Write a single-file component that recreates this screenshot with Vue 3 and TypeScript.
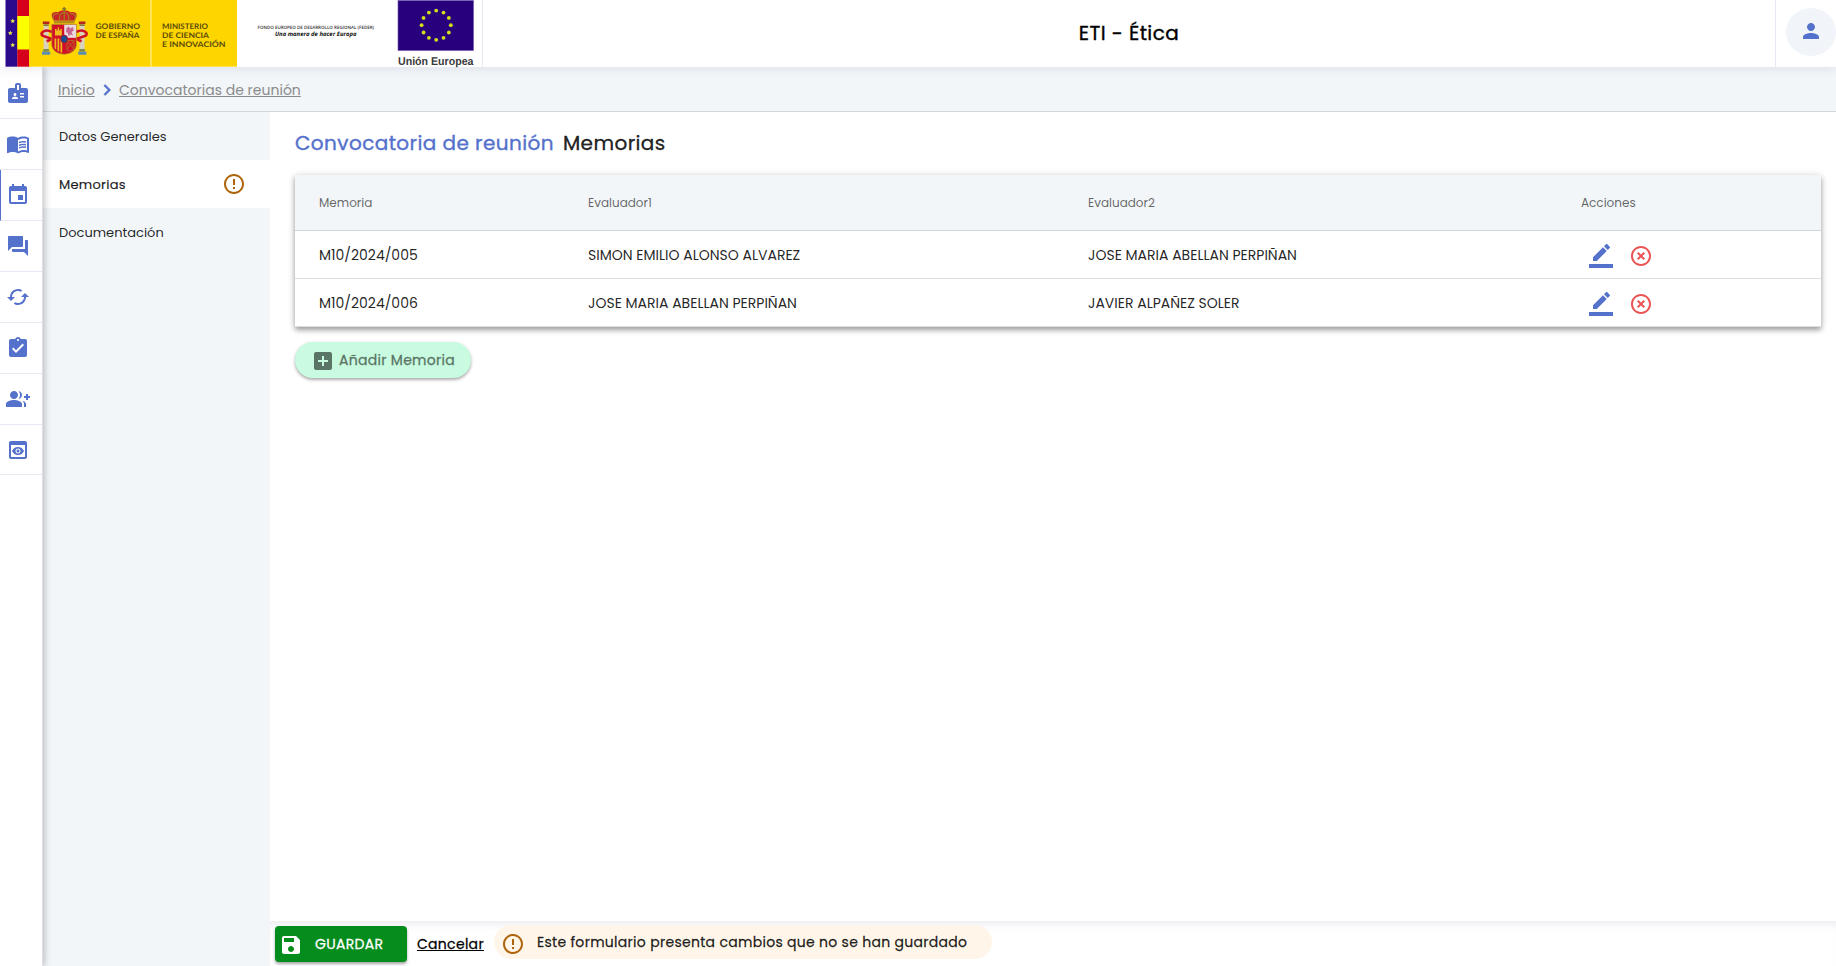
<script setup lang="ts">
interface NavItem {
  name: string
  paths: string[]
  active?: boolean
}

interface MenuItem {
  label: string
  active?: boolean
}

interface Row {
  code: string
  first: string
  second: string
}

const nav: NavItem[] = [
  {
    name: 'badge',
    paths: [
      'M20 7h-5V4c0-1.1-.9-2-2-2h-2c-1.1 0-2 .9-2 2v3H4c-1.1 0-2 .9-2 2v11c0 1.1.9 2 2 2h16c1.1 0 2-.9 2-2V9c0-1.1-.9-2-2-2zM9 12c.83 0 1.5.67 1.5 1.5S9.83 15 9 15s-1.5-.67-1.5-1.5S8.17 12 9 12zm3 6H6v-.75c0-1 2-1.5 3-1.5s3 .5 3 1.5V18zm1-9h-2V4h2v5zm5 7.5h-4V15h4v1.5zm0-3h-4V12h4v1.5z',
    ],
  },
  {
    name: 'book',
    paths: [
      'M21 5c-1.11-.35-2.33-.5-3.5-.5-1.95 0-4.05.4-5.5 1.5-1.45-1.1-3.55-1.5-5.5-1.5S2.45 4.9 1 6v14.65c0 .25.25.5.5.5.1 0 .15-.05.25-.05C3.1 20.45 5.05 20 6.5 20c1.95 0 4.05.4 5.5 1.5 1.35-.85 3.8-1.5 5.5-1.5 1.65 0 3.35.3 4.75 1.05.1.05.15.05.25.05.25 0 .5-.25.5-.5V6c-.6-.45-1.25-.75-2-1zm0 13.5c-1.1-.35-2.3-.5-3.5-.5-1.7 0-4.15.65-5.5 1.5V8c1.35-.85 3.8-1.5 5.5-1.5 1.2 0 2.4.15 3.5.5v11.5z',
      'M17.5 10.5c.88 0 1.73.09 2.5.26V9.24c-.79-.15-1.64-.24-2.5-.24-1.7 0-3.24.29-4.5.83v1.66c1.13-.64 2.7-.99 4.5-.99zM13 12.49v1.66c1.13-.64 2.7-.99 4.5-.99.88 0 1.73.09 2.5.26V11.9c-.79-.15-1.64-.24-2.5-.24-1.7 0-3.24.3-4.5.83zm4.5 1.84c-1.7 0-3.24.29-4.5.83v1.66c1.13-.64 2.7-.99 4.5-.99.88 0 1.73.09 2.5.26v-1.52c-.79-.16-1.64-.24-2.5-.24z',
    ],
  },
  {
    name: 'event',
    active: true,
    paths: [
      'M17 12h-5v5h5v-5zM16 1v2H8V1H6v2H5c-1.11 0-1.99.9-1.99 2L3 19c0 1.1.89 2 2 2h14c1.1 0 2-.9 2-2V5c0-1.1-.9-2-2-2h-1V1h-2zm3 18H5V8h14v11z',
    ],
  },
  {
    name: 'forum',
    paths: [
      'M21 6h-2v9H6v2c0 .55.45 1 1 1h11l4 4V7c0-.55-.45-1-1-1zm-4 6V3c0-.55-.45-1-1-1H3c-.55 0-1 .45-1 1v14l4-4h10c.55 0 1-.45 1-1z',
    ],
  },
  {
    name: 'cached',
    paths: [
      'M19 8l-4 4h3c0 3.31-2.69 6-6 6-1.01 0-1.97-.25-2.8-.7l-1.46 1.46C8.97 19.54 10.43 20 12 20c4.42 0 8-3.58 8-8h3l-4-4zM6 12c0-3.31 2.69-6 6-6 1.01 0 1.97.25 2.8.7l1.46-1.46C15.03 4.46 13.57 4 12 4c-4.42 0-8 3.58-8 8H1l4 4 4-4H6z',
    ],
  },
  {
    name: 'assignment',
    paths: [
      'M19 3h-4.18C14.4 1.84 13.3 1 12 1c-1.3 0-2.4.84-2.82 2H5c-1.1 0-2 .9-2 2v14c0 1.1.9 2 2 2h14c1.1 0 2-.9 2-2V5c0-1.1-.9-2-2-2zm-7 0c.55 0 1 .45 1 1s-.45 1-1 1-1-.45-1-1 .45-1 1-1zm-2 14l-4-4 1.41-1.41L10 14.17l6.59-6.59L18 9l-8 8z',
    ],
  },
  {
    name: 'group',
    paths: [
      'M22 9V7h-2v2h-2v2h2v2h2v-2h2V9h-2z',
      'M8 12c2.21 0 4-1.79 4-4s-1.79-4-4-4-4 1.79-4 4 1.79 4 4 4zm0 1c-2.67 0-8 1.34-8 4v3h16v-3c0-2.66-5.33-4-8-4z',
      'M12.51 4.05C13.43 5.11 14 6.49 14 8s-.57 2.89-1.49 3.95C14.47 11.7 16 10.04 16 8s-1.53-3.7-3.49-3.95zM16.53 13.83C17.42 14.66 18 15.7 18 17v3h2v-3c0-1.45-1.59-2.51-3.47-3.17z',
    ],
  },
  {
    name: 'preview',
    paths: [
      'M19 3H5c-1.11 0-2 .9-2 2v14c0 1.1.89 2 2 2h14c1.11 0 2-.9 2-2V5c0-1.1-.9-2-2-2zm0 16H5V7h14v12zm-5.5-6c0 .83-.67 1.5-1.5 1.5s-1.5-.67-1.5-1.5.67-1.5 1.5-1.5 1.5.67 1.5 1.5zM12 9c-2.73 0-5.06 1.66-6 4 .94 2.34 3.27 4 6 4s5.06-1.66 6-4c-.94-2.34-3.27-4-6-4zm0 6.5c-1.38 0-2.5-1.12-2.5-2.5s1.12-2.5 2.5-2.5 2.5 1.12 2.5 2.5-1.12 2.5-2.5 2.5z',
    ],
  },
]

const menu: MenuItem[] = [
  { label: 'Datos Generales' },
  { label: 'Memorias', active: true },
  { label: 'Documentación' },
]

const rows: Row[] = [
  { code: 'M10/2024/005', first: 'SIMON EMILIO ALONSO ALVAREZ', second: 'JOSE MARIA ABELLAN PERPIÑAN' },
  { code: 'M10/2024/006', first: 'JOSE MARIA ABELLAN PERPIÑAN', second: 'JAVIER ALPAÑEZ SOLER' },
]

const warning =
  'M11 15h2v2h-2zm0-8h2v6h-2zm.99-5C6.47 2 2 6.48 2 12s4.47 10 9.99 10C17.52 22 22 17.52 22 12S17.52 2 11.99 2zM12 20c-4.42 0-8-3.58-8-8s3.58-8 8-8 8 3.58 8 8-3.58 8-8 8z'

const euStars = Array.from({ length: 12 }, (_, i) => {
  const a = (i * Math.PI) / 6
  return { x: 436.2 + 14.6 * Math.sin(a), y: 25.2 - 14.6 * Math.cos(a) }
})
</script>

<template>
  <div class="app">
    <header class="top">
      <div class="logos">
        <svg class="logo-art" width="482" height="68" viewBox="0 0 482 68">
          <rect x="5.5" y="0" width="12" height="66.7" fill="#2b0a8c" />
          <rect x="17.3" y="0" width="12" height="66.7" fill="#d6001c" />
          <rect x="17.3" y="16" width="12" height="33.5" fill="#fbff00" />
          <g fill="#e9ee4a">
            <path d="M12.7 18.6l.7 1.6 1.7.1-1.3 1.1.4 1.7-1.5-.9-1.5.9.4-1.7-1.3-1.1 1.7-.1z" />
            <path d="M10.3 30.6l.7 1.6 1.7.1-1.3 1.1.4 1.7-1.5-.9-1.5.9.4-1.7-1.3-1.1 1.7-.1z" />
            <path d="M12.7 42.6l.7 1.6 1.7.1-1.3 1.1.4 1.7-1.5-.9-1.5.9.4-1.7-1.3-1.1 1.7-.1z" />
          </g>
          <rect x="29" y="0" width="208" height="66.7" fill="#ffd500" />
          <rect x="150.2" y="0" width="1.5" height="66.7" fill="#ffe873" />

          <!-- coat of arms -->
          <g>
            <rect x="43.6" y="24" width="5" height="27" fill="#d9d3bd" />
            <rect x="79.6" y="24" width="5" height="27" fill="#d9d3bd" />
            <path d="M42.8 21.5h6.6v2.6h-6.6zM78.8 21.5h6.6v2.6h-6.6z" fill="#b5261e" />
            <path d="M43.5 24.2h5.2v1.8h-5.2zM79.5 24.2h5.2v1.8h-5.2z" fill="#8c7a2c" />
            <path d="M42 51.5h8.2v3.3H42zM78.2 51.5h8.2v3.3h-8.2z" fill="#5d8fb3" />
            <path d="M43.3 49h5.6v2.6h-5.6zM79.3 49h5.6v2.6h-5.6z" fill="#7d8a4a" />
            <path d="M52 32c-4-2-8-1.8-10.2.8-1 1.8.4 3.2 3 3.7l5.4 1.8c1.2 1-1.2 2-3.6 3" fill="none" stroke="#cf1126" stroke-width="2.6" />
            <path d="M76.2 32c4-2 8-1.8 10.2.8 1 1.8-.4 3.2-3 3.7L78 38.3c-1.2 1 1.2 2 3.6 3" fill="none" stroke="#cf1126" stroke-width="2.6" />
            <path d="M51.8 24.5h24.6v19.5c0 5.5-4 9.5-12.3 10.3-8.3-.8-12.3-4.8-12.3-10.3z" fill="#d01129" stroke="#a98a23" stroke-width=".6" />
            <path d="M64.2 24.8h11.9v13H64.2z" fill="#eadbe0" />
            <path d="M66.5 28l2.5-1.5 1 2 3-1.5.8 3.5-2.3 1.5 1.5 3.5-2.5-1-2 1.8-.6-3.3-1.9-1z" fill="#c7678f" />
            <path d="M55 29h1.5v1.5h1.2v-3h1.4v3h1.2V29h1.5v6.5H55z" fill="#f0bb1c" />
            <path d="M54.5 38.5h1.7V50l-1.7-2zM57.5 38.5h1.7v13.2l-1.7-.9zM60.5 38.5h1.7v14.3l-1.7-.5z" fill="#f0bb1c" />
            <path d="M67 40.5h7v8.5l-3.5 2.6-3.5-1.6zM67 40.5l7 8.5M74 40.5l-7 8.5" fill="none" stroke="#b06a22" stroke-width=".9" />
            <ellipse cx="64.2" cy="39" rx="3.4" ry="3.9" fill="#1b4a93" stroke="#a01a2b" stroke-width=".9" />
            <path d="M53.5 23.5h21.4l-.8-3H54.3z" fill="#b58b1c" />
            <path d="M54 20.5c-4.8-6-1.4-9.7 4.2-8.2 2.6-2.8 9.4-2.8 12 0 5.6-1.5 9 2.2 4.2 8.2z" fill="#c9242a" />
            <path d="M54.5 20.8c-3.6-5.4-.4-7.6 4-7.1M74 20.8c3.6-5.4.4-7.6-4-7.1M60 20.5c-1.5-4 0-7 4.2-8.5 4.2 1.5 5.7 4.5 4.2 8.5M64.2 12v8.5" fill="none" stroke="#a87b1b" stroke-width="1.3" />
            <path d="M63.5 7h1.4v1.3h1.3v1.2h-1.3v2.3h-1.4V9.5h-1.3V8.3h1.3z" fill="#7c6f2a" />
          </g>

          <g class="gov-text">
            <text x="95.5" y="29.4" textLength="44.5" lengthAdjust="spacingAndGlyphs">GOBIERNO</text>
            <text x="95.5" y="38.4" textLength="44" lengthAdjust="spacingAndGlyphs">DE ESPAÑA</text>
            <text x="162" y="29.4" textLength="46" lengthAdjust="spacingAndGlyphs">MINISTERIO</text>
            <text x="162" y="38.4" textLength="47" lengthAdjust="spacingAndGlyphs">DE CIENCIA</text>
            <text x="162" y="47.4" textLength="63.5" lengthAdjust="spacingAndGlyphs">E INNOVACIÓN</text>
          </g>
          <text class="fund" x="257.5" y="28.9" textLength="116.5" lengthAdjust="spacingAndGlyphs">FONDO EUROPEO DE DESARROLLO REGIONAL (FEDER)</text>
          <text class="motto" x="275" y="36.4" textLength="81.5" lengthAdjust="spacingAndGlyphs">Una manera de hacer Europa</text>

          <rect x="398" y="0.5" width="75.5" height="50" fill="#28007d" stroke="#6f55a8" stroke-width=".6" />
          <circle v-for="(s, i) in euStars" :key="i" :cx="s.x" :cy="s.y" r="1.9" fill="#d5e01b" />
          <text class="union" x="398" y="64.8" textLength="75.5" lengthAdjust="spacingAndGlyphs">Unión Europea</text>
        </svg>
      </div>
      <h1 class="app-title strong">ETI - Ética</h1>
      <div class="user">
        <div class="avatar">
          <svg class="icon" viewBox="0 0 24 24">
            <path d="M12 12c2.21 0 4-1.79 4-4s-1.79-4-4-4-4 1.79-4 4 1.79 4 4 4zm0 2c-2.67 0-8 1.34-8 4v2h16v-2c0-2.66-5.33-4-8-4z" />
          </svg>
        </div>
      </div>
    </header>

    <div class="body">
      <nav class="rail">
        <a v-for="item in nav" :key="item.name" class="rail-item" :class="{ active: item.active }">
          <svg class="icon" viewBox="0 0 24 24">
            <path v-for="(p, i) in item.paths" :key="i" :d="p" />
          </svg>
        </a>
      </nav>

      <div class="page">
        <div class="crumbs">
          <a class="crumb home">Inicio</a>
          <svg class="icon chevron" viewBox="0 0 24 24"><path d="M10 6L8.59 7.41 13.17 12l-4.58 4.59L10 18l6-6z" /></svg>
          <a class="crumb">Convocatorias de reunión</a>
        </div>

        <div class="columns">
          <aside class="menu">
            <a v-for="m in menu" :key="m.label" class="menu-item" :class="{ active: m.active, strong: m.active }">
              <span>{{ m.label }}</span>
              <svg v-if="m.active" class="icon warn" viewBox="0 0 24 24"><path :d="warning" /></svg>
            </a>
          </aside>

          <section class="content">
            <main class="main">
              <h2 class="title strong"><span class="title-main">Convocatoria de reunión</span><span>Memorias</span></h2>

              <div class="table">
                <div class="tr head">
                  <span>Memoria</span>
                  <span>Evaluador1</span>
                  <span>Evaluador2</span>
                  <span>Acciones</span>
                </div>
                <div v-for="r in rows" :key="r.code" class="tr">
                  <span>{{ r.code }}</span>
                  <span>{{ r.first }}</span>
                  <span>{{ r.second }}</span>
                  <span class="actions">
                    <svg class="icon" viewBox="0 0 24 24">
                      <path d="M17.75 7L14 3.25l-10 10V17h3.75l10-10zm2.96-2.96c.39-.39.39-1.02 0-1.41L18.37.29c-.39-.39-1.02-.39-1.41 0L15 2.25 18.75 6l1.96-1.96zM0 20h24v4H0z" />
                    </svg>
                    <svg class="icon remove" viewBox="0 0 24 24">
                      <path d="M14.59 8L12 10.59 9.41 8 8 9.41 10.59 12 8 14.59 9.41 16 12 13.41 14.59 16 16 14.59 13.41 12 16 9.41 14.59 8zM12 2C6.47 2 2 6.47 2 12s4.47 10 10 10 10-4.47 10-10S17.53 2 12 2zm0 18c-4.41 0-8-3.59-8-8s3.59-8 8-8 8 3.59 8 8-3.59 8-8 8z" />
                    </svg>
                  </span>
                </div>
              </div>

              <button class="add strong">
                <svg class="icon" viewBox="0 0 24 24">
                  <path d="M19 3H5c-1.11 0-2 .9-2 2v14c0 1.1.89 2 2 2h14c1.1 0 2-.9 2-2V5c0-1.1-.9-2-2-2zm-2 10h-4v4h-2v-4H7v-2h4V7h2v4h4v2z" />
                </svg>
                <span>Añadir Memoria</span>
              </button>
            </main>

            <footer class="footer">
              <button class="save strong">
                <svg class="icon" viewBox="0 0 24 24">
                  <path d="M17 3H5c-1.11 0-2 .9-2 2v14c0 1.1.89 2 2 2h14c1.1 0 2-.9 2-2V7l-4-4zm-5 16c-1.66 0-3-1.34-3-3s1.34-3 3-3 3 1.34 3 3-1.34 3-3 3zm3-10H5V5h10v4z" />
                </svg>
                <span>GUARDAR</span>
              </button>
              <a class="cancel strong">Cancelar</a>
              <div class="notice strong">
                <svg class="icon warn" viewBox="0 0 24 24"><path :d="warning" /></svg>
                <span>Este formulario presenta cambios que no se han guardado</span>
              </div>
            </footer>
          </section>
        </div>
      </div>
    </div>
  </div>
</template>

<style>
body {
  margin: 0;
  overflow: hidden;
}
</style>

<style scoped>
* {
  box-sizing: border-box;
}
.app {
  height: 966px;
  display: flex;
  flex-direction: column;
  background: #fff;
  color: rgba(0, 0, 0, 0.87);
  font-family: Poppins, Inter, 'Open Sans', sans-serif;
  font-size: 14px;
}
.icon {
  width: 24px;
  height: 24px;
  flex: none;
  fill: #5471cb;
  display: block;
}
.icon.warn {
  fill: #ae650b;
}
button {
  border: 0;
  margin: 0;
  font-family: inherit;
}
/* weight between regular and medium */
.strong {
  font-weight: 400;
  letter-spacing: 0.021em;
  -webkit-text-stroke: 0.018em currentColor;
}

.top {
  height: 67px;
  flex: none;
  display: flex;
  background: #fff;
  box-shadow: 0 2px 11px rgba(60, 60, 110, 0.1);
  position: relative;
  z-index: 3;
}
.logos {
  width: 483px;
  border-right: 1px solid #e7e8f2;
}
.logo-art {
  display: block;
  text-rendering: geometricPrecision;
}
.gov-text {
  font: 700 7.7px Lato, sans-serif;
  fill: #594b08;
}
.fund {
  font: 600 4.6px 'Open Sans', sans-serif;
  fill: #333;
}
.motto {
  font: italic 700 6px 'Open Sans', sans-serif;
  fill: #111;
}
.union {
  font: 700 11.3px 'Liberation Sans', sans-serif;
  fill: #3a3a3a;
}
.app-title {
  flex: 1;
  margin: 0;
  text-align: center;
  font-size: 20px;
  line-height: 66px;
  color: #000;
}
.user {
  width: 61px;
  border-left: 1px solid #e7e8f2;
  padding: 8px 0 0 10px;
}
.avatar {
  width: 50px;
  height: 48px;
  border-radius: 50%;
  background: #f1f5f9;
  display: flex;
  align-items: center;
  justify-content: center;
  padding-bottom: 2px;
}

.body {
  flex: 1;
  display: flex;
  min-height: 0;
}
.rail {
  width: 43px;
  flex: none;
  background: #fff;
  border-right: 1px solid #dde0e6;
  box-shadow: 1px 0 7px rgba(0, 0, 0, 0.28);
  position: relative;
  z-index: 2;
}
.rail-item {
  display: flex;
  align-items: center;
  height: 51px;
  padding-left: 6px;
  border-bottom: 1px solid #e7e8f2;
}
.rail-item:first-child {
  height: 52px;
}
.rail-item:last-child {
  height: 50px;
}
.rail-item.active {
  padding-left: 5px;
  border-left: 1px solid #5471cb;
}

.page {
  flex: 1;
  display: flex;
  flex-direction: column;
  min-width: 0;
}
.crumbs {
  height: 45px;
  flex: none;
  display: flex;
  align-items: center;
  padding: 2px 0 0 15px;
  background: #f2f6f9;
  border-bottom: 1px solid #d0d7dc;
}
.crumb {
  line-height: 20px;
  color: #8b8b8b;
  text-decoration: underline;
}
.crumb.home {
  width: 37px;
}
.chevron {
  width: 22px;
  height: 22px;
  margin: 0 1px;
  stroke: #5471cb;
  stroke-width: 0.6;
}

.columns {
  flex: 1;
  display: flex;
  min-height: 0;
}
.menu {
  width: 227px;
  flex: none;
  background: #f2f6f9;
}
.menu-item {
  height: 48px;
  display: flex;
  align-items: center;
  justify-content: space-between;
  padding: 0 24px 0 16px;
  font-size: 13px;
  color: rgba(0, 0, 0, 0.87);
}
.menu-item span {
  padding-top: 1px;
}
.menu-item.active {
  background: #fff;
}

.content {
  flex: 1;
  display: flex;
  flex-direction: column;
  min-width: 0;
}
.main {
  flex: 1;
  padding: 16px 15px 0 25px;
}
.title {
  margin: 0 0 17px;
  display: flex;
  gap: 9px;
  font-size: 20px;
  line-height: 30px;
}
.title-main {
  color: #5471cb;
}
.table {
  box-shadow: 0 3px 5px rgba(0, 0, 0, 0.32), 0 1px 8px rgba(0, 0, 0, 0.14);
  background: #fff;
}
.tr {
  display: grid;
  grid-template-columns: 269px 500px 493px 1fr;
  align-items: center;
  height: 48px;
  padding: 1px 0 0 24px;
  border-bottom: 1px solid #dcdfe1;
}
.tr.head {
  height: 56px;
  padding-top: 0;
  background: #f2f6f9;
  border-bottom-color: #d0d7dc;
  font-size: 12px;
  color: rgba(0, 0, 0, 0.6);
}
.actions {
  display: flex;
  gap: 16px;
  padding: 1px 0 0 8px;
}
.remove {
  fill: #ea5455;
}
.add {
  width: 176px;
  height: 36px;
  margin-top: 15px;
  padding: 0 0 0 16px;
  display: flex;
  align-items: center;
  gap: 4px;
  border-radius: 18px;
  background: #c8fbe0;
  color: #5a7465;
  font-size: 14px;
  box-shadow: 0 2px 3px rgba(0, 0, 0, 0.26), 0 1px 4px rgba(0, 0, 0, 0.1);
}
.add .icon {
  fill: #5a7465;
  margin-top: 2px;
}

.footer {
  height: 45px;
  flex: none;
  display: flex;
  align-items: flex-start;
  padding: 4px 0 0 5px;
  box-shadow: inset 0 9px 9px -6px rgba(60, 60, 110, 0.1);
}
.save {
  width: 132px;
  height: 36px;
  margin-top: 1px;
  padding: 0 0 0 4px;
  display: flex;
  align-items: center;
  gap: 12px;
  border-radius: 4px;
  background: #048c1c;
  color: #fff;
  font-size: 14px;
  box-shadow: 0 2px 3px rgba(0, 0, 0, 0.35);
}
.save .icon {
  fill: #fff;
  margin-top: 2px;
}
.cancel {
  width: 67px;
  margin: 9px 0 0 10px;
  font-size: 14px;
  line-height: 20px;
  color: #000;
  text-decoration: underline;
}
.notice {
  width: 498px;
  height: 34px;
  margin-left: 10px;
  padding-left: 7px;
  display: flex;
  align-items: center;
  gap: 12px;
  border-radius: 17px;
  background: #fff6e9;
  font-size: 14px;
  white-space: nowrap;
}
.notice .icon {
  margin-top: 4px;
}
</style>
